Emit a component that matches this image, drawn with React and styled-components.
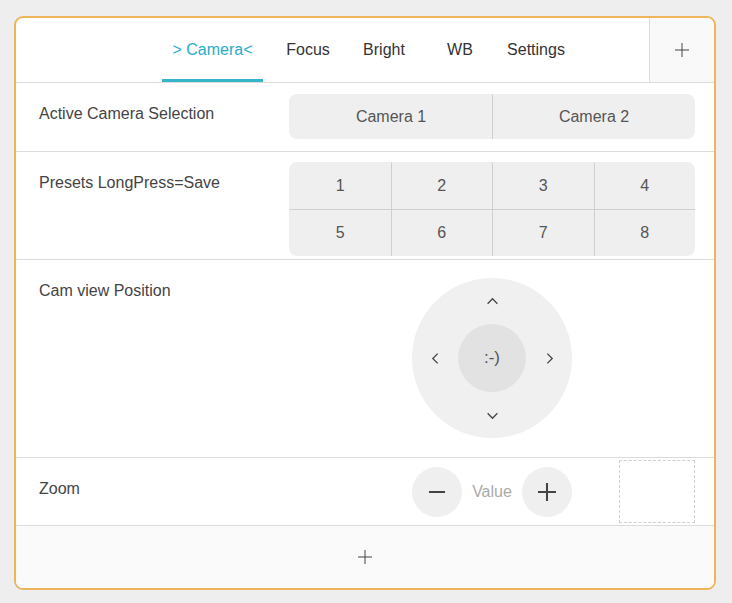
import styled, { createGlobalStyle } from "styled-components";

const GlobalStyle = createGlobalStyle`
   body {
      margin: 0;
      background: #eeeeee;
      font-family: "Liberation Sans", Arial, sans-serif;
      color: #444;
   }
`;

const Page = styled.div`
   padding: 16px 14px;
`;
const Card = styled.section`
   width: 698px;
   border: 2px solid #eeb45a;
   border-radius: 9px;
   background: #fff;
   overflow: hidden;
`;
const Header = styled.header`
   display: flex;
   height: 64px;
   border-bottom: 1px solid #dcdcdc;
`;
const Tabs = styled.nav`
   flex: 1;
   display: flex;
   padding-left: 146px;
`;
const Tab = styled.div`
   width: ${(p) => (p.$active ? "101px" : "76px")};
   margin-right: ${(p) => (p.$active ? "7px" : "0")};
   display: flex;
   align-items: center;
   justify-content: center;
   font-size: 16px;
   color: ${(p) => (p.$active ? "#2aabc9" : "#333")};
   border-bottom: 3px solid ${(p) => (p.$active ? "#35b5c9" : "transparent")};
   padding-top: 3px;
   box-sizing: border-box;
`;
const AddCell = styled.div`
   width: 64px;
   border-left: 1px solid #dcdcdc;
   background: #f9f9f9;
   display: flex;
   align-items: center;
   justify-content: center;
`;
const Row = styled.div`
   display: grid;
   grid-template-columns: 1fr 406px;
   align-items: start;
   padding: ${(p) => p.$pad};
   padding-left: 23px;
   padding-right: 19px;
   border-bottom: 1px solid #dcdcdc;
`;
const Label = styled.div`
   font-size: 16px;
   line-height: 18px;
   color: #444;
   padding-top: ${(p) => p.$top};
`;
const Segments = styled.div`
   display: grid;
   grid-template-columns: repeat(${(p) => p.$cols}, 1fr);
   background: #efefef;
   border-radius: 8px;
   overflow: hidden;
`;
const Segment = styled.div`
   height: ${(p) => p.$h};
   display: flex;
   align-items: center;
   justify-content: center;
   font-size: 16px;
   color: #555;
   border-left: 1px solid ${(p) => (p.$first ? "transparent" : "#cfcfcf")};
   border-top: 1px solid ${(p) => (p.$top ? "#cfcfcf" : "transparent")};
   box-sizing: border-box;
`;
const PadArea = styled.div`
   display: flex;
   justify-content: center;
`;
const Pad = styled.div`
   width: 160px;
   height: 160px;
   border-radius: 50%;
   background: #f0f0f0;
   display: grid;
   grid-template-columns: 46px 68px 46px;
   grid-template-rows: 46px 68px 46px;
   place-items: center;
`;
const PadCenter = styled.div`
   width: 68px;
   height: 68px;
   border-radius: 50%;
   background: #e2e2e2;
   display: flex;
   align-items: center;
   justify-content: center;
   font-size: 17px;
   color: #555;
`;
const ZoomArea = styled.div`
   display: grid;
   grid-template-columns: 1fr auto 1fr;
   align-items: center;
`;
const ZoomGroup = styled.div`
   grid-column: 2;
   display: flex;
   align-items: center;
   gap: 10px;
`;
const RoundButton = styled.div`
   width: 50px;
   height: 50px;
   border-radius: 50%;
   background: #efefef;
   display: flex;
   align-items: center;
   justify-content: center;
`;
const Value = styled.span`
   font-size: 16px;
   color: #aaa;
   width: 40px;
   text-align: center;
`;
const Placeholder = styled.div`
   justify-self: end;
   width: 76px;
   height: 63px;
   border: 1px dashed #cfcfcf;
   box-sizing: border-box;
`;
const Footer = styled.footer`
   height: 62px;
   background: #fafafa;
   display: flex;
   align-items: center;
   justify-content: center;
`;

const Plus = ({ size = 14, w = 1 }) => (
   <svg width={size} height={size} viewBox="0 0 14 14">
      <path d="M7 0v14M0 7h14" stroke="#444" strokeWidth={w} fill="none" />
   </svg>
);

const Chevron = ({ dir }) => {
   const rot = { up: 0, right: 90, down: 180, left: 270 }[dir];
   return (
      <svg width="13" height="13" viewBox="0 0 12 12" style={{ transform: `rotate(${rot}deg)` }}>
         <path d="M1.5 8L6 3.5L10.5 8" stroke="#444" strokeWidth="1.2" fill="none" />
      </svg>
   );
};

const tabs = ["> Camera<", "Focus", "Bright", "WB", "Settings"];

function App() {
   return (
      <Page>
         <GlobalStyle />
         <Card>
            <Header>
               <Tabs>
                  {tabs.map((t, i) => (
                     <Tab key={t} $active={i === 0}>
                        {t}
                     </Tab>
                  ))}
               </Tabs>
               <AddCell>
                  <Plus size={14} />
               </AddCell>
            </Header>

            <Row $pad="11px 0 12px">
               <Label $top="11px">Active Camera Selection</Label>
               <Segments $cols={2}>
                  <Segment $h="45px" $first>
                     Camera 1
                  </Segment>
                  <Segment $h="45px">Camera 2</Segment>
               </Segments>
            </Row>

            <Row $pad="10px 0 3px">
               <Label $top="12px">Presets LongPress=Save</Label>
               <Segments $cols={4}>
                  {[1, 2, 3, 4, 5, 6, 7, 8].map((n, i) => (
                     <Segment key={n} $h="47px" $first={i % 4 === 0} $top={i >= 4}>
                        {n}
                     </Segment>
                  ))}
               </Segments>
            </Row>

            <Row $pad="18px 0 19px">
               <Label $top="4px">Cam view Position</Label>
               <PadArea>
                  <Pad>
                     <span />
                     <Chevron dir="up" />
                     <span />
                     <Chevron dir="left" />
                     <PadCenter>:-)</PadCenter>
                     <Chevron dir="right" />
                     <span />
                     <Chevron dir="down" />
                     <span />
                  </Pad>
               </PadArea>
            </Row>

            <Row $pad="2px 0 2px">
               <Label $top="20px">Zoom</Label>
               <ZoomArea>
                  <ZoomGroup>
                     <RoundButton>
                        <svg width="16" height="16" viewBox="0 0 16 16">
                           <path d="M0 8h16" stroke="#444" strokeWidth="2" />
                        </svg>
                     </RoundButton>
                     <Value>Value</Value>
                     <RoundButton>
                        <Plus size={18} w={1.6} />
                     </RoundButton>
                  </ZoomGroup>
                  <Placeholder />
               </ZoomArea>
            </Row>

            <Footer>
               <Plus size={14} />
            </Footer>
         </Card>
      </Page>
   );
}

export default App;
